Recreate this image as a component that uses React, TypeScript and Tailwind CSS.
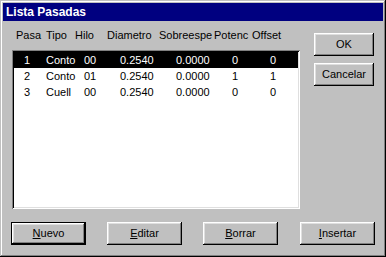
import React from 'react';

const rows = [
  { pasa: '1', tipo: 'Conto', hilo: '00', diam: '0.2540', sobre: '0.0000', pot: '0', off: '0' },
  { pasa: '2', tipo: 'Conto', hilo: '01', diam: '0.2540', sobre: '0.0000', pot: '1', off: '1' },
  { pasa: '3', tipo: 'Cuell', hilo: '00', diam: '0.2540', sobre: '0.0000', pot: '0', off: '0' },
];

const headers = ['Pasa', 'Tipo', 'Hilo', 'Diametro', 'Sobreespe', 'Potenc', 'Offset'];

const bevel =
  'shadow-[inset_-1px_-1px_#000,inset_1px_1px_#fff,inset_-2px_-2px_#808080,inset_2px_2px_#dfdfdf]';

function Btn({ label, isDefault }: { label: string; isDefault?: boolean }) {
  // first letter is the mnemonic
  const text = (
    <>
      <span className="underline underline-offset-[1px]">{label[0]}</span>
      {label.slice(1)}
    </>
  );
  if (isDefault) {
    return (
      <div className="w-[75px] h-[23px] border border-black">
        <div className={`w-full h-full flex items-center justify-center ${bevel}`}>{text}</div>
      </div>
    );
  }
  return (
    <div className={`w-[75px] h-[23px] flex items-center justify-center ${bevel}`}>{text}</div>
  );
}

function SideBtn({ label }: { label: string }) {
  return (
    <div className={`w-[60px] h-[23px] flex items-center justify-center ${bevel}`}>{label}</div>
  );
}

export default function App() {
  return (
    <div
      className="w-[386px] h-[257px] bg-[#c0c0c0] p-[3px] text-[11px] leading-[13px] text-black shadow-[inset_-1px_-1px_#000,inset_1px_1px_#c0c0c0,inset_-2px_-2px_#808080,inset_2px_2px_#fff] flex flex-col"
      style={{ fontFamily: '"Liberation Sans", Arial, sans-serif' }}
    >
      {/* title bar */}
      <div className="h-[18px] bg-[#000080] text-white font-bold text-[12px] flex items-center pl-[3px]">
        Lista Pasadas
      </div>

      <div className="flex pl-[9px] pt-[8px]">
        {/* list column */}
        <div className="w-[288px] flex flex-col">
          <div className="h-[21px] pl-[4px] grid grid-cols-[30px_29px_32px_52px_55px_38px_1fr] whitespace-nowrap">
            {headers.map((h) => (
              <span key={h}>{h}</span>
            ))}
          </div>
          <div className="h-[159px] bg-white p-[2px] shadow-[inset_1px_1px_#808080,inset_-1px_-1px_#fff,inset_2px_2px_#000,inset_-2px_-2px_#dfdfdf]">
            {rows.map((r, i) => (
              <div
                key={r.pasa}
                className={`h-[16px] pl-[10px] pt-[2px] grid grid-cols-[22px_38px_36px_56px_56px_38px_1fr] ${
                  i === 0 ? 'bg-black text-white' : ''
                }`}
              >
                <span>{r.pasa}</span>
                <span>{r.tipo}</span>
                <span>{r.hilo}</span>
                <span>{r.diam}</span>
                <span>{r.sobre}</span>
                <span>{r.pot}</span>
                <span>{r.off}</span>
              </div>
            ))}
          </div>
        </div>

        {/* side buttons */}
        <div className="ml-[14px] pt-[4px] flex flex-col gap-[7px]">
          <SideBtn label="OK" />
          <SideBtn label="Cancelar" />
        </div>
      </div>

      {/* bottom buttons */}
      <div className="flex pl-[8px] pt-[13px] gap-[21px]">
        <Btn label="Nuevo" isDefault />
        <Btn label="Editar" />
        <Btn label="Borrar" />
        <div className="ml-[1px]">
          <Btn label="Insertar" />
        </div>
      </div>
    </div>
  );
}
